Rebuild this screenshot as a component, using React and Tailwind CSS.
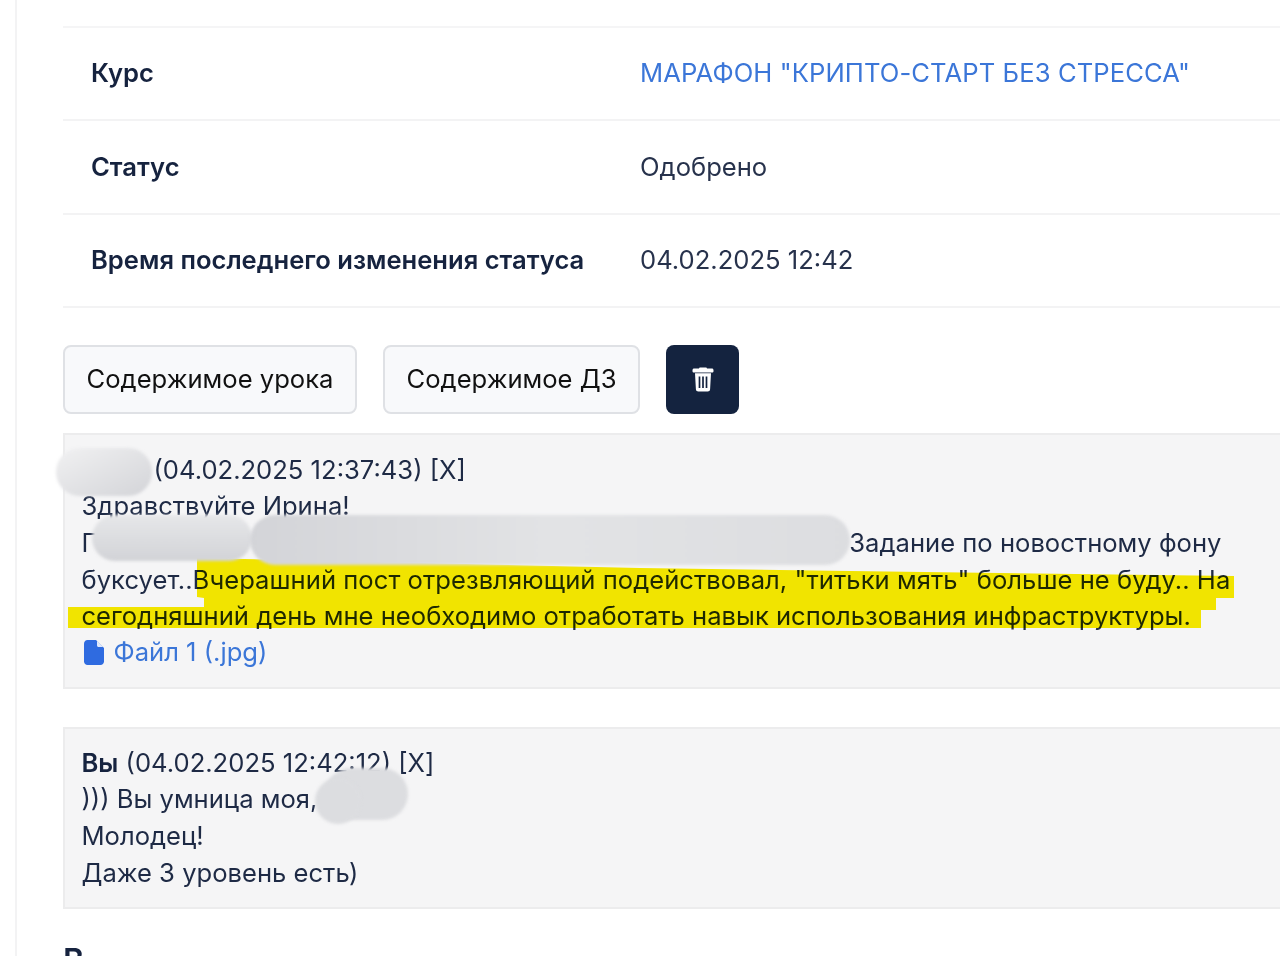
const rows = [
  { label: 'Курс', value: 'МАРАФОН "КРИПТО-СТАРТ БЕЗ СТРЕССА"', link: true },
  { label: 'Статус', value: 'Одобрено' },
  { label: 'Время последнего изменения статуса', value: '04.02.2025 12:42' },
]

function TrashIcon() {
  return (
    <svg width="22" height="25" viewBox="0 0 22 25">
      <path
        fill="#fff"
        d="M7 1.6C7 .8 7.6.4 8.3.4h5.4c.7 0 1.3.4 1.3 1.2h4.8c1 0 1.7.7 1.7 1.7v.9c0 .8-.6 1.4-1.4 1.4H1.9C1.100 5.600.5 5 .5 4.200v-.9c0-1 .7-1.700 1.700-1.700zM3 6.200h16l-.9 16.100c-.1 1.300-1.100 2.300-2.400 2.300H6.300c-1.300 0-2.300-1-2.400-2.300z"
      />
      <path stroke="#14233f" strokeWidth="1.700" d="M7.500 9.500v11.500M11 9.500v11.500M14.500 9.500v11.500" />
    </svg>
  )
}

function FileIcon() {
  return (
    <svg width="20" height="25" viewBox="0 0 20 25" className="ml-[2px] mr-[10px]">
      <path
        fill="#2f6be0"
        d="M3.500 0H12l8 8v13.500c0 1.900-1.600 3.500-3.500 3.500h-13C1.600 25 0 23.400 0 21.500v-18C0 1.600 1.600 0 3.500 0z"
      />
      <path fill="#dfe8fb" d="M13 .8 19.200 7H14.500c-.8 0-1.500-.7-1.500-1.500z" />
    </svg>
  )
}

function Blob({ className }) {
  return <div className={`absolute blur-[1.5px] ${className}`} />
}

export default function App() {
  return (
    <div className="relative h-[956px] w-[1280px] overflow-hidden bg-white font-['Inter',sans-serif] text-[25.6px] leading-[36.6px] text-[#1e2a45]">
      <div className="ml-[15px] h-full w-[1300px] border-l-2 border-[#f3f3f4] pl-[46px] pt-[26px]">
        <div className="border-t-2 border-[#f5f5f6]">
          {rows.map(({ label, value, link }) => (
            <div key={label} className="flex h-[93.3px] items-center border-b-2 border-[#f3f3f4] pl-[28px]">
              <div className="w-[549px] font-semibold text-[#16233f]">{label}</div>
              <div className={link ? 'tracking-[0.09px] text-[#3b76d8]' : 'text-[#27324c]'}>{value}</div>
            </div>
          ))}
        </div>

        <div className="mt-[37px] flex gap-[26px]">
          <button className="h-[69px] w-[294px] rounded-lg border-2 border-[#dfe1e5] bg-[#f8f9fb] text-[#111]">
            Содержимое урока
          </button>
          <button className="h-[69px] w-[257px] rounded-lg border-2 border-[#dfe1e5] bg-[#f8f9fb] text-[#111]">
            Содержимое ДЗ
          </button>
          <button className="flex h-[69px] w-[73px] items-center justify-center rounded-lg bg-[#14233f]">
            <TrashIcon />
          </button>
        </div>

        <div className="mt-[19px] h-[256px] border-2 border-[#ececed] bg-[#f5f5f6] pl-[16.500px] pt-[17px]">
          <div>
            <span className="inline-block w-[72px]" />
            (04.02.2025 12:37:43) [X]
          </div>
          <div>Здравствуйте Ирина!</div>
          <div>
            Г
            <span className="inline-block w-[753px]" />
            Задание по новостному фону
          </div>
          <div className="tracking-[0.03px]">
            буксует..Вчерашний пост отрезвляющий подействовал, "титьки мять" больше не буду.. На
          </div>
          <div>сегодняшний день мне необходимо отработать навык использования инфраструктуры.</div>
          <div className="-mt-[1px] flex items-center text-[#3b76d8]">
            <FileIcon />
            Файл 1 (.jpg)
          </div>
        </div>

        <div className="mt-[38px] h-[182px] border-2 border-[#ececed] bg-[#f5f5f6] pl-[16.500px] pt-[16px]">
          <div>
            <span className="font-semibold text-[#16233f]">Вы</span> (04.02.2025 12:42:12) [X]
          </div>
          <div>))) Вы умница моя,</div>
          <div>Молодец!</div>
          <div>Даже 3 уровень есть)</div>
        </div>

        <div className="mt-[34px] text-[32px] font-semibold text-[#16233f]">В</div>
      </div>

      {/* marker highlight */}
      <svg className="pointer-events-none absolute left-0 top-0 mix-blend-multiply" width="1280" height="956">
        <polygon
          fill="#fbee00"
          points="197,558 640,568 850,571 1234,576 1234,598 1216,598 1216,610 1201,610 1201,628 68,628 68,607 204,607 204,598 197,597"
        />
      </svg>

      {/* scribbled-out names */}
      <Blob className="left-[56px] top-[448px] h-[48px] w-[96px] rounded-[24px] bg-gradient-to-br from-[#f1f1f2] to-[#d3d4d8]" />
      <Blob className="left-[92px] top-[515px] h-[46px] w-[160px] rounded-[24px] bg-gradient-to-b from-[#e6e7e9] to-[#d2d3d7]" />
      <Blob className="left-[250px] top-[515px] h-[50px] w-[600px] rounded-[26px] bg-gradient-to-r from-[#d3d4d8] via-[#e2e3e5] to-[#dcdde0]" />
      <Blob className="left-[325px] top-[768px] h-[52px] w-[83px] rounded-[26px] bg-[#dcdde0]" />
      <Blob className="left-[315px] top-[778px] h-[46px] w-[46px] rounded-[23px] bg-[#dcdde0]" />
    </div>
  )
}
